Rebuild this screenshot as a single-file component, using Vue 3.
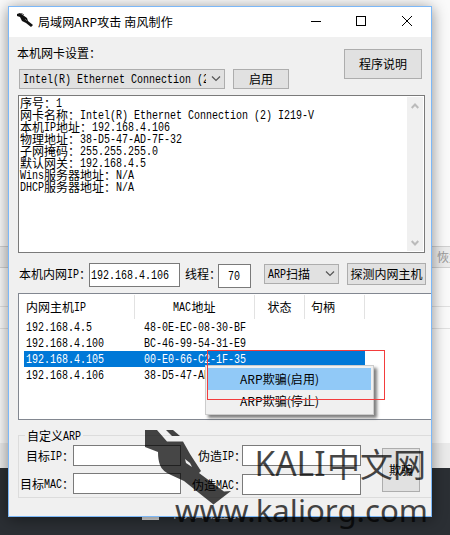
<script setup>
import { h } from 'vue'

// Mixed text on a fixed pitch: 12px per Chinese character, 6px per Latin one.
const Cell = (props) =>
  h(
    'span',
    { class: 'cell' },
    (props.t.match(/[\x20-\x7e]+|[^\x20-\x7e]+/g) || []).map((run) =>
      /[\x20-\x7e]/.test(run)
        ? h('span', { class: 'latin', style: { width: run.length * 6 + 'px' } }, [h('i', run)])
        : h('span', run)
    )
  )
Cell.props = ['t']

const info = [
  '序号：1',
  '网卡名称：Intel(R) Ethernet Connection (2) I219-V',
  '本机IP地址：192.168.4.106',
  '物理地址：38-D5-47-AD-7F-32',
  '子网掩码：255.255.255.0',
  '默认网关：192.168.4.5',
  'Wins服务器地址：N/A',
  'DHCP服务器地址：N/A'
]
const hosts = [
  ['192.168.4.5', '48-0E-EC-08-30-BF'],
  ['192.168.4.100', 'BC-46-99-54-31-E9'],
  ['192.168.4.105', '00-E0-66-C2-1F-35'],
  ['192.168.4.106', '38-D5-47-AD-7F-32']
]
const selected = 2
</script>

<template>
  <div class="desktop">
    <div class="page-top"></div>
    <div class="page-bar"><span>恢复</span></div>
    <div class="page-mid"><div class="page-row"></div></div>
    <div class="page-foot"></div>
    <div class="page-dark"><b></b><span>下次自动登录</span></div>

    <div class="window">
      <header class="title">
        <svg class="logo" width="17" height="16" viewBox="0 0 17 16">
          <path d="M0 1 3 0 10 5 11 8 16 12 14 14 9 10 5 8 3 4 0 3Z" fill="#111" />
          <path d="M4 0 7 2M8 6 10 8" stroke="#555" fill="none" />
        </svg>
        <h1>局域网ARP攻击 南风制作</h1>
        <svg class="controls" width="102" height="12" viewBox="0 0 102 12" fill="none" stroke="#000">
          <path d="M0 6.5H10" />
          <rect x="45.500" y="1.500" width="9" height="9" />
          <path d="M91 1 101 11M101 1 91 11" />
        </svg>
      </header>

      <section class="adapter">
        <div class="adapter-left">
          <Cell t="本机网卡设置：" />
          <div class="pick">
            <div class="combo wide"><div class="clip"><Cell t="Intel(R) Ethernet Connection (2)" /></div>
              <svg width="10" height="6" viewBox="0 0 10 6"><path d="M1 .5 5 4.500 9 .5" /></svg>
            </div>
            <div class="btn enable"><Cell t="启用" /></div>
          </div>
        </div>
        <div class="btn about"><Cell t="程序说明" /></div>
      </section>

      <section class="info">
        <div class="lines"><div v-for="l in info" :key="l"><Cell :t="l" /></div></div>
        <div class="scroll">
          <svg width="8" height="6" viewBox="0 0 8 6"><path d="M.7 5 4 1.500 7.300 5" /></svg>
          <svg width="8" height="6" viewBox="0 0 8 6"><path d="M.7 1 4 4.500 7.300 1" /></svg>
        </div>
      </section>

      <section class="scan">
        <div class="lbl ip-lbl"><Cell t="本机内网IP：" /></div>
        <div class="field ip"><Cell t="192.168.4.106" /></div>
        <div class="lbl th-lbl"><Cell t="线程：" /></div>
        <div class="field threads"><Cell t="70" /></div>
        <div class="combo mode"><Cell t="ARP扫描" />
          <svg width="10" height="6" viewBox="0 0 10 6"><path d="M1 .5 5 4.500 9 .5" /></svg>
        </div>
        <div class="btn probe"><Cell t="探测内网主机" /></div>
      </section>

      <section class="list">
        <div class="head">
          <div><Cell t="内网主机IP" /></div>
          <div class="mid"><Cell t="MAC地址" /></div>
          <div class="mid"><Cell t="状态" /></div>
          <div class="handle"><Cell t="句柄" /></div>
        </div>
        <div v-for="(r, i) in hosts" :key="r[0]" class="host" :class="{ on: i === selected }">
          <div><Cell :t="r[0]" /></div>
          <div><Cell :t="r[1]" /></div>
        </div>
      </section>

      <section class="group">
        <div class="legend"><Cell t="自定义ARP" /></div>
        <div class="form">
          <div class="col first">
            <div class="pair"><Cell t="目标IP：" /><div class="field"></div></div>
            <div class="pair"><Cell t="目标MAC：" /><div class="field"></div></div>
          </div>
          <div class="col second">
            <div class="pair"><Cell t="伪造IP：" /><div class="field"></div></div>
            <div class="pair"><Cell t="伪造MAC：" /><div class="field"></div></div>
          </div>
          <div class="btn cheat"><Cell t="欺骗" /></div>
        </div>
      </section>
    </div>

    <div class="menu">
      <div class="item active">ARP欺骗(启用)</div>
      <div class="item">ARP欺骗(停止)</div>
    </div>
    <div class="marker"></div>

    <svg class="watermark" width="450" height="115" viewBox="0 420 450 115">
      <path fill-rule="evenodd" d="M145 430H157L167 441.500H183L190 454 201 471 199 473 224 491.500 231 491 213.500 504.500 204 497 184 481 171 475Q162 471 160 465Q158 460 158 452L145 447ZM185 459 186 463 192 467 190 463Z" />
      <path d="M166 430H173L180 436H172Z" />
      <text x="254.500" y="476" font-size="35" textLength="71" lengthAdjust="spacingAndGlyphs">KALI</text>
      <text x="327" y="477" font-size="33" textLength="99" lengthAdjust="spacingAndGlyphs">中文网</text>
      <text x="175" y="521.500" font-size="31" textLength="253" lengthAdjust="spacingAndGlyphs">www.kaliorg.com</text>
    </svg>
  </div>
</template>

<style>
body { margin: 0; overflow: hidden; }
.cell { display: inline-flex; white-space: pre; line-height: 12px; height: 12px; }
.cell .latin { display: inline-block; font-family: "Liberation Mono", monospace; }
.cell .latin i { display: inline-block; font-style: normal; transform: translateY(1px) scaleX(0.8333); transform-origin: 0 50%; }
</style>

<style scoped>
.desktop { position: relative; width: 450px; height: 535px; overflow: hidden; background: #fafafa; font: 12px/12px "Noto Sans CJK SC", sans-serif; color: #000; }
.desktop * { box-sizing: border-box; }
.page-top { height: 246px; }
.page-bar { height: 22px; border: 1px solid #d0d0d0; border-width: 1px 0; background: #ececec; color: #999; padding: 4px 0 0 437px; white-space: nowrap; }
.page-mid { height: 175px; padding-top: 38px; }
.page-row { height: 23px; border: 1px solid #e0e0e0; border-width: 1px 0; }
.page-foot { height: 25px; background: #ebebeb; }
.page-dark { height: 67px; background: #2b2f34; display: flex; gap: 10px; padding: 39px 0 0 142px; color: #ccc; }
.page-dark b { width: 17px; height: 13px; background: #ddd; }

.window { position: absolute; left: 8px; top: 6px; width: 424px; height: 511px; border: 1px solid #7cb8f8; background: #f0f0f0; box-shadow: 0 2px 14px rgba(0, 0, 0, 0.45); display: flex; flex-direction: column; overflow: hidden; clip-path: inset(-20px); }
.title { height: 30px; flex: none; background: #fff; display: flex; align-items: center; padding: 0 18px 0 8px; }
.title h1 { flex: 1; margin: 0 0 0 4px; font: 12px/16px "Noto Sans CJK SC", sans-serif; letter-spacing: 0.12px; }
.title .logo { margin-top: -3px; }
.title .controls { margin-top: -2px; }

.btn { display: flex; align-items: center; justify-content: center; border: 1px solid #adadad; background: #e1e1e1; }
.field { background: #fff; border: 1px solid #7a7a7a; display: flex; align-items: center; }
.combo { border: 1px solid #adadad; background: #e1e1e1; display: flex; align-items: center; justify-content: space-between; padding: 0 3px; height: 20px; }
.combo svg, .scroll svg { flex: none; fill: none; stroke: #555; stroke-width: 1.2; }

.adapter { display: flex; justify-content: space-between; padding: 10px 9px 0 8px; height: 58px; flex: none; }
.adapter-left { display: flex; flex-direction: column; gap: 10px; }
.pick { display: flex; gap: 8px; padding-left: 2px; }
.wide { width: 206px; }
.clip { width: 183px; overflow: hidden; display: flex; height: 14px; padding-top: 1px; }
.enable { width: 56px; height: 20px; }
.about { width: 78px; height: 30px; margin-top: 2px; }

.info { height: 158px; flex: none; margin: 0 6px 0 9px; border: 1px solid #7a7a7a; background: #fff; display: flex; justify-content: space-between; padding: 1px; }
.lines { display: flex; flex-direction: column; }
.lines > div { height: 12px; display: flex; }
.scroll { width: 16px; background: #f0f0f0; display: flex; flex-direction: column; align-items: center; justify-content: space-between; padding: 6px 0 5px; }
.scroll svg { stroke: #bbb; stroke-width: 2; }

.scan { display: flex; height: 40px; flex: none; padding: 10px 0 0 10px; align-items: flex-start; }
.lbl { height: 22px; display: flex; align-items: center; }
.ip-lbl { width: 70px; }
.ip { width: 91px; height: 24px; padding-left: 1px; }
.th-lbl { width: 33px; margin-left: 5px; }
.threads { width: 33px; height: 24px; margin-top: 1px; padding-left: 9px; }
.mode { width: 75px; margin: 1px 8px 0 13px; }
.probe { width: 79px; height: 22px; }

.list { height: 127px; flex: none; margin-left: 9px; border: 1px solid #828790; border-right: 0; background: #fff; padding: 1px 0 0 5px; }
.head { display: grid; grid-template-columns: 111px 120px 50px 60px; height: 24px; }
.head > div { display: flex; align-items: center; border-right: 1px solid #e2e2e2; padding-left: 2px; }
.head > .mid { justify-content: center; padding-left: 0; }
.head > .handle { padding-left: 6px; }
.host { display: grid; grid-template-columns: 118px 223px; width: 341px; height: 16px; align-items: center; padding-left: 2px; }
.host > div { display: flex; }
.host.on { background: #0078d7; color: #fff; }

.group { margin: 15px -2px 0 9px; height: 63px; flex: none; border: 1px solid #dcdcdc; }
.legend { width: 58px; height: 12px; margin: -6px 0 0 6px; padding-left: 2px; background: #f0f0f0; display: flex; }
.form { display: flex; padding-top: 3px; }
.col { display: flex; flex-direction: column; gap: 7px; }
.pair { display: flex; align-items: center; justify-content: flex-end; height: 21px; }
.pair .field { height: 21px; }
.first { width: 162px; }
.first .field { width: 108px; margin-left: -1px; }
.second { width: 180px; }
.second .field { width: 119px; margin-left: -4px; }
.second .pair + .pair { margin-top: 1px; }
.cheat { width: 38px; height: 44px; margin: 3px 0 0 21px; }

.menu { position: absolute; left: 205px; top: 365px; width: 169px; height: 50px; border: 1px solid #ccc; background: #f0f0f0; padding: 2px; box-shadow: 3px 3px 3px rgba(0, 0, 0, 0.5); font-size: 12px; }
.item { height: 22px; line-height: 21px; padding-left: 32px; white-space: nowrap; letter-spacing: 0.05px; }
.item.active { background: #91c9f7; }
.marker { position: absolute; left: 207px; top: 350px; width: 178px; height: 50px; border: 1px solid #f33c3c; }
.watermark { position: absolute; left: 0; top: 420px; fill: #000; opacity: 0.72; font-family: "Noto Sans", "Noto Sans CJK SC", sans-serif; }
</style>
